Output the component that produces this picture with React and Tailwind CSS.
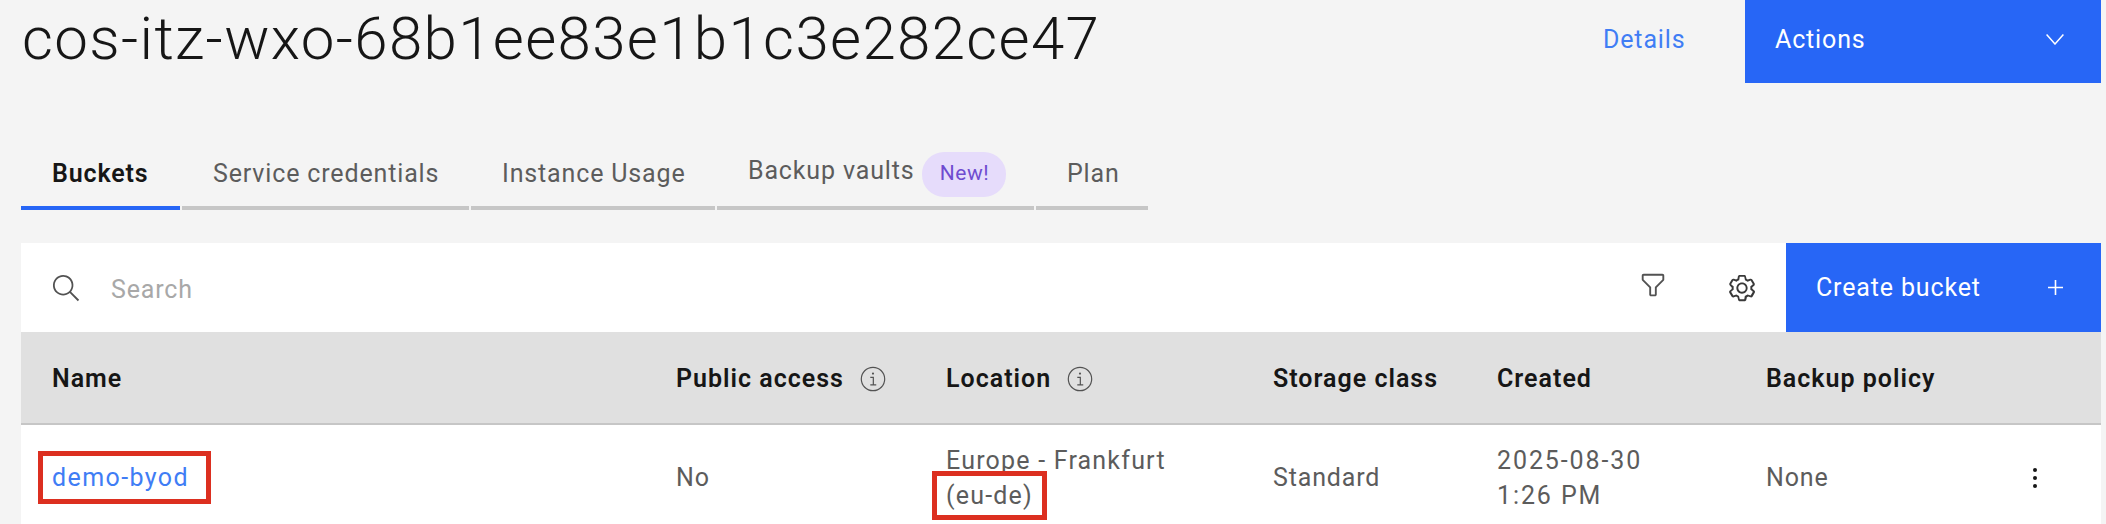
const Carbon = ({ className, children }) => (
  <svg viewBox="0 0 16 16" fill="currentColor" className={className}>{children}</svg>
);

const InfoIcon = () => (
  <svg viewBox="0 0 24 24" fill="none" stroke="#525252" strokeWidth="1.1" className="w-[26px] h-[26px] shrink-0">
    <circle cx="12" cy="12" r="10.8" />
    <path d="M9.5 10.5H12.3V17.5M9.5 17.5H15" />
    <circle cx="12" cy="7" r="1" fill="#525252" stroke="none" />
  </svg>
);

const tabs = [
  { label: "Buckets", w: "w-[159px]", active: true },
  { label: "Service credentials", w: "w-[287px]" },
  { label: "Instance Usage", w: "w-[244px]" },
  { label: "Backup vaults", w: "w-[317px]", badge: "New!" },
  { label: "Plan", w: "w-[112px]" },
];

const Tab = ({ label, w, active, badge }) => (
  <div className={`${w} h-[60px] pl-[31px] pb-[8px] flex items-center border-b-[4px] ${active ? "border-[#2766f6] text-[#161616] font-semibold" : "border-[#c6c6c6] text-[#5c5c5c]"}`}>
    {badge ? (
      <div className="flex items-center gap-[8px]">
        <span className="-mt-[6px]">{label}</span>
        <span className="h-[45px] w-[84px] rounded-[22px] bg-[#e6dcfb] text-[#6f4bd0] text-[21px] tracking-[0.5px] flex items-center justify-center">{badge}</span>
      </div>
    ) : (
      <span>{label}</span>
    )}
  </div>
);

const HeaderCell = ({ children }) => (
  <div className="pl-[31px] pt-[2px] flex items-center gap-[16px] font-semibold text-[#161616] tracking-[1px]">{children}</div>
);

const Cell = ({ children }) => (
  <div className="pl-[31px] flex items-center text-[#5c5c5c] leading-[35px]">{children}</div>
);

export default function App() {
  return (
    <div className="w-[2106px] h-[524px] overflow-hidden bg-[#f4f4f4] text-[25px] tracking-[0.85px] font-['Roboto',sans-serif] flex flex-col">
      <div className="flex items-start h-[83px] pr-[5px]">
        <h1 className="flex-1 pl-[22px] -mt-[1px] text-[60px] leading-[80px] font-light text-[#161616] tracking-[1.35px]">cos-itz-wxo-68b1ee83e1b1c3e282ce47</h1>
        <a className="w-[142px] h-[83px] pb-[4px] flex items-center text-[#3f7df5]">Details</a>
        <button className="w-[356px] h-[83px] pb-[4px] bg-[#2766f6] text-white flex items-center justify-between pl-[30px] pr-[37px]">
          Actions
          <svg viewBox="0 0 18 11" fill="none" stroke="currentColor" strokeWidth="1.5" className="w-[18px] h-[11px]"><path d="M0.6 0.6 9 10 17.4 0.6" /></svg>
        </button>
      </div>

      <div className="flex gap-[2px] pl-[21px] mt-[67px]">
        {tabs.map((t) => <Tab key={t.label} {...t} />)}
      </div>

      <div className="ml-[21px] mr-[5px] mt-[33px] flex-1 bg-white flex flex-col">
        <div className="h-[89px] flex items-center shrink-0">
          <Carbon className="w-[30px] h-[30px] ml-[30px] text-[#525252] shrink-0">
            <path d="M15,14.3L10.7,10c1.9-2.3,1.6-5.8-0.7-7.7S4.2,0.7,2.3,3S0.7,8.8,3,10.7c2,1.7,5,1.7,7,0l4.3,4.3L15,14.3z M2,6.5 C2,4,4,2,6.5,2S11,4,11,6.5S9,11,6.5,11S2,9,2,6.5z" />
          </Carbon>
          <span className="ml-[30px] pt-[4px] flex-1 text-[#a8a8a8]">Search</span>
          <Carbon className="w-[30px] h-[30px] -mt-[5px] text-[#525252] shrink-0">
            <path d="M9,14H7c-0.6,0-1-0.4-1-1V9.4L2.3,5.7C2.1,5.5,2,5.3,2,5V3c0-0.6,0.4-1,1-1h10c0.6,0,1,0.4,1,1v2c0,0.3-0.1,0.5-0.3,0.7L10,9.4V13C10,13.6,9.6,14,9,14z M3,3v2l4,4v4h2V9l4-4V3H3z" />
          </Carbon>
          <Carbon className="w-[30px] h-[30px] ml-[59px] text-[#393939] shrink-0">
            <path d="M13.5,8.4c0-0.1,0-0.3,0-0.4c0-0.1,0-0.3,0-0.4l1-0.8c0.4-0.3,0.4-0.9,0.2-1.3l-1.2-2C13.3,3.2,13,3,12.6,3c-0.1,0-0.2,0-0.3,0.1l-1.2,0.4c-0.2-0.1-0.4-0.3-0.7-0.4l-0.3-1.3C10.1,1.3,9.7,1,9.2,1H6.8c-0.5,0-0.9,0.3-1,0.8L5.6,3.1C5.3,3.2,5.1,3.3,4.9,3.4L3.7,3C3.6,3,3.5,3,3.4,3C3,3,2.7,3.2,2.5,3.5l-1.2,2C1.1,5.9,1.2,6.4,1.6,6.8l0.9,0.9c0,0.1,0,0.3,0,0.4c0,0.1,0,0.3,0,0.4l-1,0.8c-0.4,0.3-0.5,0.9-0.2,1.3l1.2,2C2.7,12.8,3,13,3.4,13c0.1,0,0.2,0,0.3-0.1l1.2-0.4c0.2,0.1,0.4,0.3,0.7,0.4l0.3,1.3c0.1,0.5,0.5,0.8,1,0.8h2.4c0.5,0,0.9-0.3,1-0.8l0.3-1.3c0.2-0.1,0.4-0.2,0.7-0.4l1.2,0.4c0.1,0,0.2,0.1,0.3,0.1c0.4,0,0.7-0.2,0.9-0.5l1.1-2c0.2-0.4,0.2-0.9-0.2-1.2L13.5,8.4z M12.6,12l-1.7-0.6c-0.4,0.3-0.9,0.6-1.4,0.8L9.2,14H6.8l-0.4-1.8c-0.5-0.2-0.9-0.5-1.4-0.8L3.4,12l-1.2-2l1.4-1.2c-0.1-0.5-0.1-1.1,0-1.6L2.2,6l1.2-2l1.7,0.6C5.5,4.2,6,4,6.5,3.8L6.8,2h2.4l0.4,1.8c0.5,0.2,0.9,0.5,1.4,0.8L12.6,4l1.2,2l-1.4,1.2c0.1,0.5,0.1,1.1,0,1.6l1.4,1.2L12.6,12z" />
            <path d="M8,11c-1.7,0-3-1.3-3-3s1.3-3,3-3s3,1.3,3,3C11,9.6,9.7,11,8,11z M8,6C6.9,6,6,6.8,6,7.9C6,9.1,6.8,10,7.9,10c1.2,0,2.1-0.8,2.1-1.9C10,6.9,9.2,6,8,6z" />
          </Carbon>
          <button className="ml-[29px] w-[315px] h-[89px] shrink-0 bg-[#2766f6] text-white flex items-center justify-between pl-[30px] pr-[38px]">
            Create bucket
            <svg viewBox="0 0 15 15" stroke="currentColor" strokeWidth="1.6" className="w-[15px] h-[15px]"><path d="M7.5 0V15M0 7.5H15" /></svg>
          </button>
        </div>

        <div className="grid grid-cols-[624px_270px_327px_224px_269px_1fr] h-[93px] shrink-0 bg-[#e0e0e0] border-b-[2px] border-[#c6c6c6]">
          <HeaderCell>Name</HeaderCell>
          <HeaderCell>Public access <InfoIcon /></HeaderCell>
          <HeaderCell>Location <InfoIcon /></HeaderCell>
          <HeaderCell>Storage class</HeaderCell>
          <HeaderCell>Created</HeaderCell>
          <HeaderCell>Backup policy</HeaderCell>
        </div>

        <div className="grid grid-cols-[624px_270px_327px_224px_269px_1fr] flex-1 pt-[6px]">
          <Cell>
            <span className="relative text-[#3f7df5] tracking-[1.4px]">
              demo-byod
              <span className="absolute -left-[14px] -right-[22px] -top-[9px] -bottom-[9px] border-[5px] border-[#dc2f20]" />
            </span>
          </Cell>
          <Cell>No</Cell>
          <Cell>
            <div className="tracking-[1.2px]">
              <div>Europe - Frankfurt</div>
              <div className="relative w-fit">
                (eu-de)
                <span className="absolute -left-[14px] -right-[14px] -top-[7px] -bottom-[7px] border-[5px] border-[#dc2f20]" />
              </div>
            </div>
          </Cell>
          <Cell>Standard</Cell>
          <Cell><div className="tracking-[1.9px]"><div>2025-08-30</div><div>1:26 PM</div></div></Cell>
          <div className="flex items-center justify-between pl-[31px] pr-[64px] text-[#5c5c5c]">
            None
            <svg viewBox="0 0 4 20" fill="#161616" className="w-[4px] h-[20px]"><circle cx="2" cy="2" r="2" /><circle cx="2" cy="10" r="2" /><circle cx="2" cy="18" r="2" /></svg>
          </div>
        </div>
      </div>
    </div>
  );
}
